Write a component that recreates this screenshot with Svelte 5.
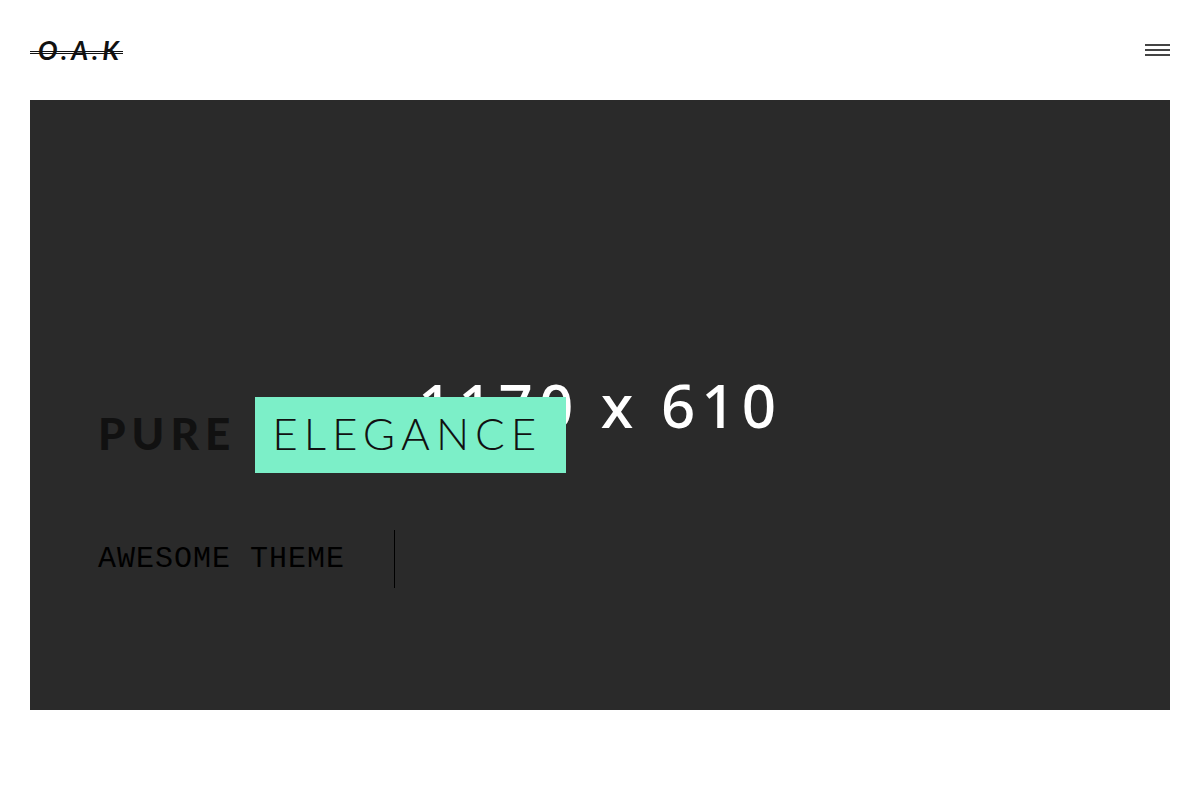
<script lang="ts">
	let {
		title = 'PURE',
		highlight = 'ELEGANCE',
		subtitle = 'AWESOME THEME',
		placeholder = '1170 x 610'
	}: {
		title?: string;
		highlight?: string;
		subtitle?: string;
		placeholder?: string;
	} = $props();

	let menuOpen = $state(false);
</script>

<header class="header">
	<a class="logo" href="/">O.A.K</a>
	<button
		class="menu-toggle"
		type="button"
		aria-label="Menu"
		aria-expanded={menuOpen}
		onclick={() => (menuOpen = !menuOpen)}
	>
		<span class="bar"></span>
		<span class="bar"></span>
		<span class="bar"></span>
	</button>
</header>

<main class="hero">
	<div class="placeholder">{placeholder}</div>
	<div class="caption">
		<h1 class="title">
			<strong class="title-strong">{title}</strong>
			<span class="title-highlight">{highlight}</span>
		</h1>
		<p class="subtitle">{subtitle}</p>
	</div>
</main>

<style>
	:global(body) {
		background: #fff;
		color: #111;
		font-family: Lato, sans-serif;
	}

	.header {
		display: flex;
		align-items: center;
		justify-content: space-between;
		height: 100px;
		padding: 0 30px;
	}

	.logo {
		position: relative;
		padding-left: 8px;
		color: #111;
		font-size: 26px;
		font-style: italic;
		font-weight: 700;
		line-height: 32px;
		letter-spacing: 4px;
		text-decoration: none;
	}

	/* Double rule through the wordmark */
	.logo::after {
		content: '';
		position: absolute;
		left: 0;
		right: 0;
		top: 17px;
		height: 1px;
		border-top: 1px solid #111;
		border-bottom: 1px solid #111;
	}

	.menu-toggle {
		display: flex;
		flex-direction: column;
		gap: 3px;
		width: 25px;
		padding: 0;
		border: 0;
		background: none;
		cursor: pointer;
	}

	.bar {
		height: 2px;
		background: #444;
	}

	.hero {
		display: grid;
		margin: 0 30px;
		aspect-ratio: 1140 / 610;
		background: #2a2a2a;
	}

	.placeholder,
	.caption {
		grid-area: 1 / 1;
	}

	.placeholder {
		place-self: center;
		color: #fff;
		font-family: 'Noto Sans', sans-serif;
		font-size: 60px;
		font-weight: 500;
		line-height: 72px;
		letter-spacing: 6px;
	}

	.caption {
		z-index: 1;
		align-self: end;
		justify-self: start;
		padding: 0 0 122px 68px;
	}

	.title {
		display: flex;
		align-items: center;
		gap: 19px;
		margin: 0 0 57px;
		font-size: 44px;
		font-weight: 300;
		line-height: 72px;
		letter-spacing: 6px;
	}

	.title-strong,
	.title-highlight {
		padding-bottom: 4px;
	}

	.title-strong {
		font-weight: 900;
	}

	.title-highlight {
		padding-right: 24px;
		padding-left: 17px;
		background: #7cefc8;
	}

	.subtitle {
		width: fit-content;
		margin: 0;
		padding-right: 49px;
		border-right: 1px solid #000;
		color: #000;
		font-family: 'Liberation Mono', monospace;
		font-size: 30px;
		line-height: 58px;
		letter-spacing: 1px;
	}
</style>
